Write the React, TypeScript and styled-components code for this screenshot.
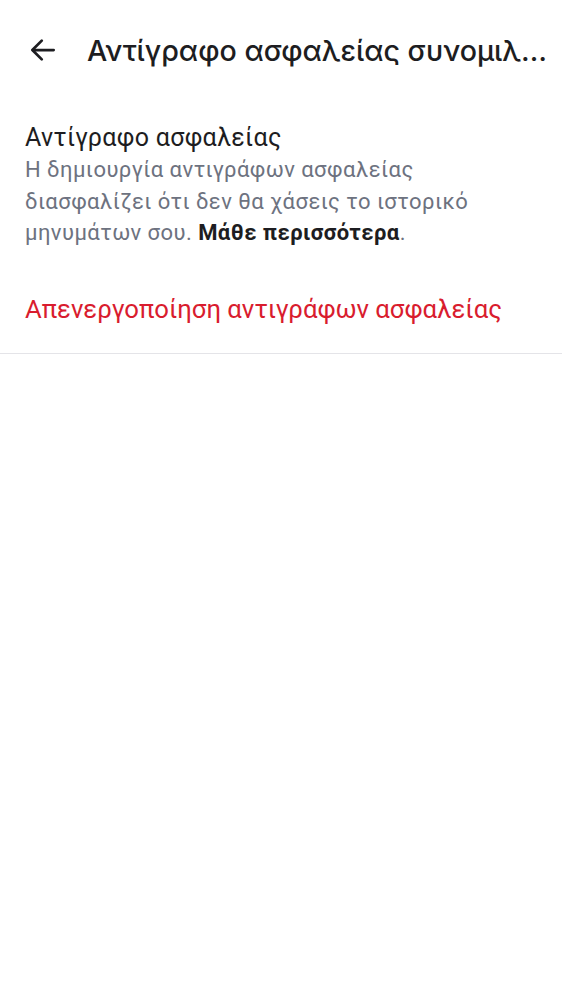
import styled, { createGlobalStyle } from 'styled-components';

const GlobalStyle = createGlobalStyle`
  body {
    margin: 0;
    background: #ffffff;
    font-family: 'Roboto', 'Noto Sans', sans-serif;
  }
`;

const Page = styled.div`
  width: 562px;
  min-height: 1000px;
  background: #ffffff;
`;

const Header = styled.div`
  display: flex;
  align-items: center;
  height: 100px;
  padding: 0 14px 0 28px;
  gap: 29px;
  box-sizing: border-box;
`;

const BackButton = styled.button`
  display: flex;
  align-items: center;
  justify-content: center;
  padding: 0;
  border: none;
  background: none;
  width: 30px;
  height: 30px;
  color: #1d1d21;
  flex-shrink: 0;
`;

const Title = styled.h1`
  margin: 0;
  font-family: 'Inter', sans-serif;
  font-weight: 500;
  font-size: 28.6px;
  color: #1d1d21;
  white-space: nowrap;
  overflow: hidden;
  text-overflow: ellipsis;
  min-width: 0;
`;

const Section = styled.div`
  padding: 22px 60px 0 25px;
`;

const Label = styled.div`
  font-size: 25px;
  line-height: 32px;
  letter-spacing: 0.3px;
  color: #1d1d21;
`;

const Description = styled.p`
  margin: 0;
  font-size: 22px;
  line-height: 31.5px;
  color: #6d7280;
  letter-spacing: 0.45px;

  b {
    color: #1d1d21;
    font-weight: 700;
  }
`;

const DangerRow = styled.div`
  padding: 43px 25px 27px;
  font-size: 25.7px;
  line-height: 34px;
  color: #d91c2e;
  border-bottom: 1px solid #e4e4e8;
`;

export default function App() {
  return (
    <Page>
      <GlobalStyle />
      <Header>
        <BackButton aria-label="Πίσω">
          <svg width="30" height="30" viewBox="0 0 24 24" fill="none" stroke="currentColor" strokeWidth="2.2" strokeLinecap="round" strokeLinejoin="round">
            <path d="M20.5 12H4" />
            <path d="M11 4.5L3.5 12l7.5 7.5" />
          </svg>
        </BackButton>
        <Title>Αντίγραφο ασφαλείας συνομιλιών</Title>
      </Header>
      <Section>
        <Label>Αντίγραφο ασφαλείας</Label>
        <Description>
          Η δημιουργία αντιγράφων ασφαλείας διασφαλίζει ότι δεν θα χάσεις το ιστορικό μηνυμάτων σου. <b>Μάθε περισσότερα</b>.
        </Description>
      </Section>
      <DangerRow>Απενεργοποίηση αντιγράφων ασφαλείας</DangerRow>
    </Page>
  );
}
